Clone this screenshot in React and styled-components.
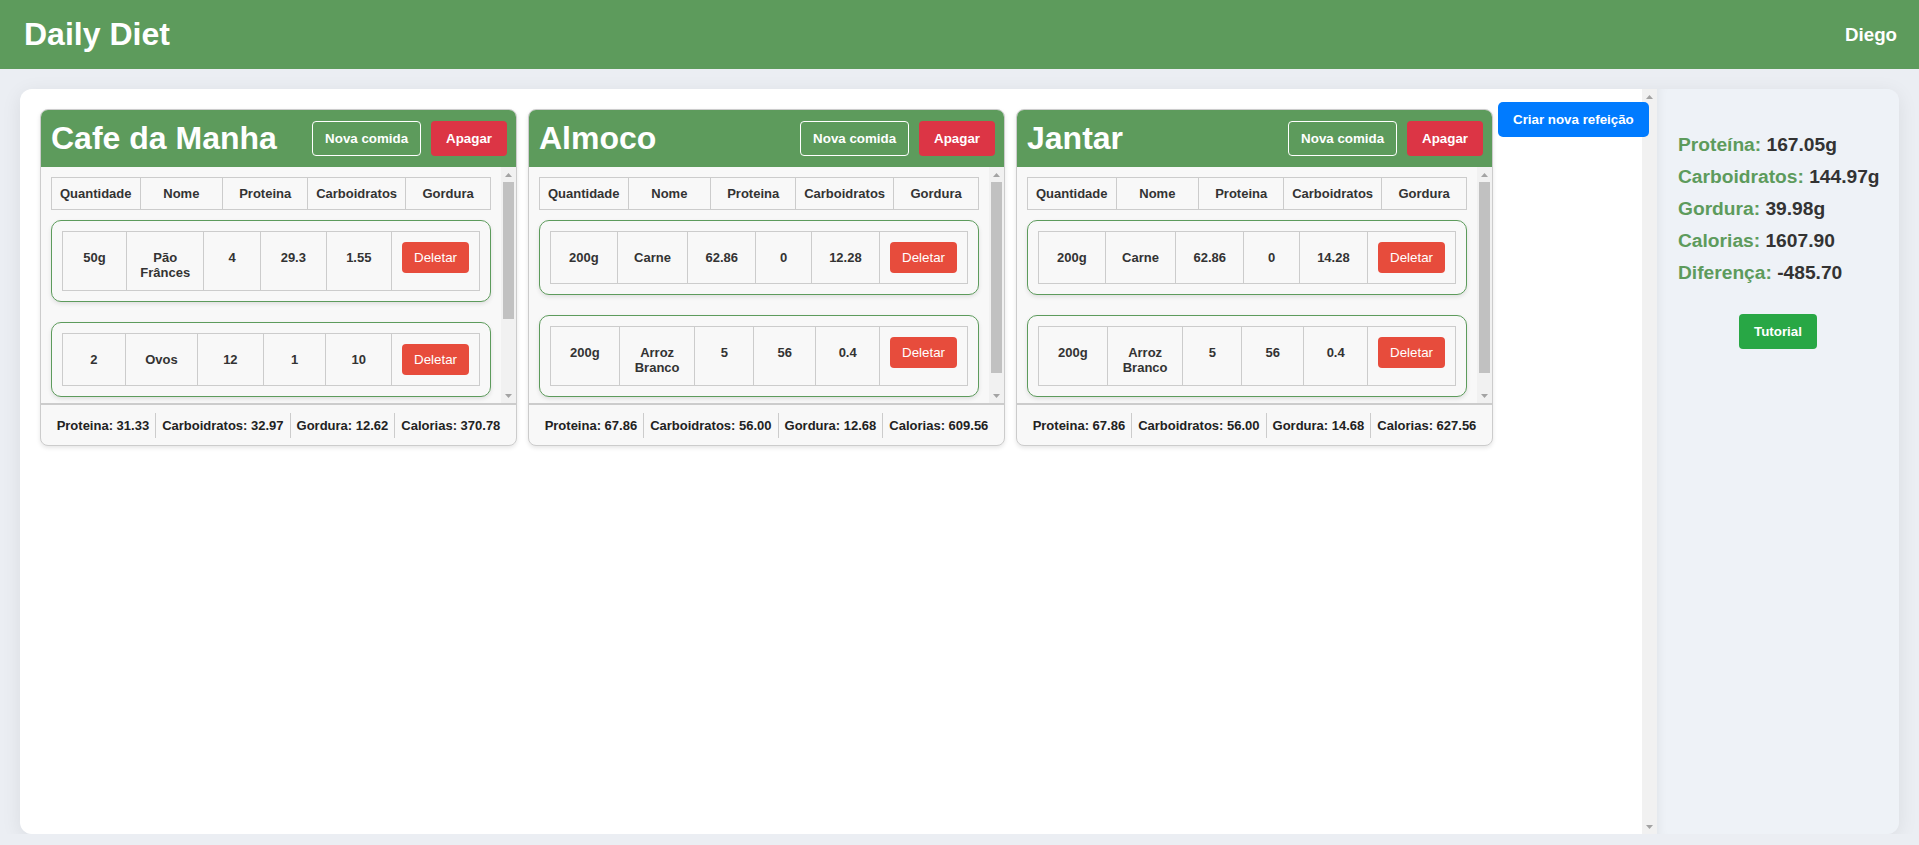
import React from 'react';
import styled, { createGlobalStyle } from 'styled-components';

const GREEN = '#5d9b5c';
const FONT = '"Liberation Sans", Arial, sans-serif';

const Global = createGlobalStyle`
  * { box-sizing: border-box; }
  html, body { margin: 0; padding: 0; }
  body {
    font-family: ${FONT};
    background: #ebeef3;
    color: #333;
    overflow: hidden;
  }
`;

const TopBar = styled.header`
  height: 69px;
  background: ${GREEN};
  color: #fff;
  display: flex;
  align-items: center;
  justify-content: space-between;
  padding: 0 22px 0 24px;
`;

const Brand = styled.h1`
  margin: 0;
  font-size: 32px;
  font-weight: bold;
`;

const User = styled.span`
  font-size: 18.72px;
  font-weight: bold;
`;

const Shell = styled.div`
  display: flex;
  margin: 20px 20px 0;
  height: 745px;
  border-radius: 12px;
  overflow: hidden;
  box-shadow: 0 4px 20px rgba(0, 0, 0, 0.08);
`;

const Board = styled.main`
  flex: 1;
  min-width: 0;
  display: flex;
  background: #fff;
`;

const BoardContent = styled.div`
  flex: 1;
  min-width: 0;
`;

const BoardRow = styled.div`
  display: flex;
  align-items: flex-start;
  padding: 13px 20px 20px;
`;

const MealList = styled.div`
  display: flex;
  gap: 11px;
  margin-top: 7px;
  flex-shrink: 0;
`;

const CreateButton = styled.button`
  position: relative;
  z-index: 1;
  flex-shrink: 0;
  margin-left: 5px;
  height: 35px;
  padding: 0 15px;
  border: 0;
  border-radius: 5px;
  background: #007bff;
  color: #fff;
  font: bold 13.333px ${FONT};
  white-space: nowrap;
  cursor: pointer;
`;

/* classic scrollbar drawing */
const Rail = styled.div`
  flex: 0 0 15px;
  width: 15px;
  display: flex;
  flex-direction: column;
  background: #f1f1f1;
`;

const RailArrow = styled.div`
  flex: 0 0 15px;
  display: flex;
  align-items: center;
  justify-content: center;
`;

const RailTrack = styled.div`
  flex: 1;
  padding: 0 2px;
`;

const RailThumb = styled.div`
  width: 100%;
  background: #c1c1c1;
`;

function ScrollRail({ ratio = 0 }) {
  return (
    <Rail>
      <RailArrow>
        <svg width="7" height="4" viewBox="0 0 7 4">
          <path d="M0 4 L3.5 0 L7 4 Z" fill="#a3a3a3" />
        </svg>
      </RailArrow>
      <RailTrack>
        {ratio > 0 && <RailThumb style={{ height: `${ratio * 100}%` }} />}
      </RailTrack>
      <RailArrow>
        <svg width="7" height="4" viewBox="0 0 7 4">
          <path d="M0 0 L3.5 4 L7 0 Z" fill="#a3a3a3" />
        </svg>
      </RailArrow>
    </Rail>
  );
}

const Card = styled.section`
  width: 477px;
  flex: 0 0 477px;
  background: #f8f8f8;
  border: 1px solid #ccc;
  border-radius: 8px;
  overflow: hidden;
  box-shadow: 0 2px 4px rgba(0, 0, 0, 0.1);
`;

const CardHead = styled.div`
  height: 57px;
  background: ${GREEN};
  display: flex;
  align-items: center;
  gap: 10px;
  padding: 0 9px 0 10px;
`;

const CardTitle = styled.h2`
  margin: 0;
  flex: 1;
  font-size: 32px;
  font-weight: bold;
  color: #fff;
  white-space: nowrap;
`;

const HeadButton = styled.button`
  height: 35px;
  padding: 0 ${(p) => (p.$outline ? '12px' : '15px')};
  border: ${(p) => (p.$outline ? '1px solid #fff' : '0')};
  border-radius: 4px;
  background: ${(p) => (p.$outline ? 'transparent' : '#dc3545')};
  color: #fff;
  font: bold 13.333px ${FONT};
  cursor: pointer;
`;

const CardBody = styled.div`
  display: flex;
  height: 236px;
`;

const CardScroll = styled.div`
  flex: 1;
  min-width: 0;
  overflow: hidden;
  padding: 10px;
`;

const Grid = styled.table`
  width: 100%;
  border-collapse: collapse;
  font-size: 13px;
  font-weight: bold;
  color: #333;
  margin-bottom: ${(p) => (p.$head ? '10px' : '0')};
`;

const HeadCell = styled.th`
  width: 20%;
  border: 1px solid #ccc;
  padding: 8px;
  text-align: center;
  font-weight: bold;
`;

const Cell = styled.td`
  width: ${(p) => (p.$action ? 'auto' : '20%')};
  border: 1px solid #ccc;
  padding: 10px;
  text-align: center;
  vertical-align: baseline;
`;

const FoodItem = styled.div`
  border: 1px solid ${GREEN};
  border-radius: 10px;
  padding: 10px;
  margin-bottom: 20px;
  background: #f8f8f8;
  box-shadow: 0 2px 4px rgba(0, 0, 0, 0.1);
`;

const DeleteButton = styled.button`
  padding: 8px 12px;
  border: 0;
  border-radius: 4px;
  background: #e74c3c;
  color: #fff;
  font: 13.333px ${FONT};
  cursor: pointer;
`;

const Totals = styled.div`
  height: 42px;
  border-top: 2px solid #ccc;
  display: flex;
  align-items: center;
  justify-content: center;
`;

const TotalItem = styled.span`
  padding: 5px 6px;
  font-size: 13px;
  font-weight: bold;
  color: #222;
  & + & {
    border-left: 1px solid #ccc;
  }
`;

const Side = styled.aside`
  width: 242px;
  flex: 0 0 242px;
  background: #eef2f7;
  padding: 45px 21px 20px;
  display: flex;
  flex-direction: column;
  gap: 10px;
  box-shadow: inset 10px 0 12px -10px rgba(0, 0, 0, 0.08);
`;

const Stat = styled.p`
  margin: 0;
  font-size: 19.2px;
  font-weight: bold;
  line-height: 22px;
  color: #333;
  white-space: nowrap;
`;

const StatLabel = styled.span`
  color: ${GREEN};
`;

const TutorialButton = styled.button`
  align-self: center;
  margin-top: 20px;
  height: 35px;
  padding: 0 15px;
  border: 0;
  border-radius: 4px;
  background: #28a745;
  color: #fff;
  font: bold 13.333px ${FONT};
  cursor: pointer;
`;

const meals = [
  {
    name: 'Cafe da Manha',
    scroll: 0.665,
    foods: [
      ['50g', 'Pão Frânces', '4', '29.3', '1.55'],
      ['2', 'Ovos', '12', '1', '10'],
    ],
    totals: ['31.33', '32.97', '12.62', '370.78'],
  },
  {
    name: 'Almoco',
    scroll: 0.925,
    foods: [
      ['200g', 'Carne', '62.86', '0', '12.28'],
      ['200g', 'Arroz Branco', '5', '56', '0.4'],
    ],
    totals: ['67.86', '56.00', '12.68', '609.56'],
  },
  {
    name: 'Jantar',
    scroll: 0.925,
    foods: [
      ['200g', 'Carne', '62.86', '0', '14.28'],
      ['200g', 'Arroz Branco', '5', '56', '0.4'],
    ],
    totals: ['67.86', '56.00', '14.68', '627.56'],
  },
];

const summary = [
  ['Proteína:', '167.05g'],
  ['Carboidratos:', '144.97g'],
  ['Gordura:', '39.98g'],
  ['Calorias:', '1607.90'],
  ['Diferença:', '-485.70'],
];

function MealCard({ meal }) {
  const [p, c, g, cal] = meal.totals;
  return (
    <Card>
      <CardHead>
        <CardTitle>{meal.name}</CardTitle>
        <HeadButton $outline>Nova comida</HeadButton>
        <HeadButton>Apagar</HeadButton>
      </CardHead>
      <CardBody>
        <CardScroll>
          <Grid $head>
            <thead>
              <tr>
                <HeadCell>Quantidade</HeadCell>
                <HeadCell>Nome</HeadCell>
                <HeadCell>Proteina</HeadCell>
                <HeadCell>Carboidratos</HeadCell>
                <HeadCell>Gordura</HeadCell>
              </tr>
            </thead>
          </Grid>
          {meal.foods.map((f, i) => (
            <FoodItem key={i}>
              <Grid>
                <tbody>
                  <tr>
                    {f.map((v, j) => (
                      <Cell key={j}>{v}</Cell>
                    ))}
                    <Cell $action>
                      <DeleteButton>Deletar</DeleteButton>
                    </Cell>
                  </tr>
                </tbody>
              </Grid>
            </FoodItem>
          ))}
        </CardScroll>
        <ScrollRail ratio={meal.scroll} />
      </CardBody>
      <Totals>
        <TotalItem>Proteina: {p}</TotalItem>
        <TotalItem>Carboidratos: {c}</TotalItem>
        <TotalItem>Gordura: {g}</TotalItem>
        <TotalItem>Calorias: {cal}</TotalItem>
      </Totals>
    </Card>
  );
}

export default function App() {
  return (
    <>
      <Global />
      <TopBar>
        <Brand>Daily Diet</Brand>
        <User>Diego</User>
      </TopBar>
      <Shell>
        <Board>
          <BoardContent>
            <BoardRow>
              <MealList>
                {meals.map((m) => (
                  <MealCard key={m.name} meal={m} />
                ))}
              </MealList>
              <CreateButton>Criar nova refeição</CreateButton>
            </BoardRow>
          </BoardContent>
          <ScrollRail />
        </Board>
        <Side>
          {summary.map(([label, value]) => (
            <Stat key={label}>
              <StatLabel>{label}</StatLabel> {value}
            </Stat>
          ))}
          <TutorialButton>Tutorial</TutorialButton>
        </Side>
      </Shell>
    </>
  );
}
